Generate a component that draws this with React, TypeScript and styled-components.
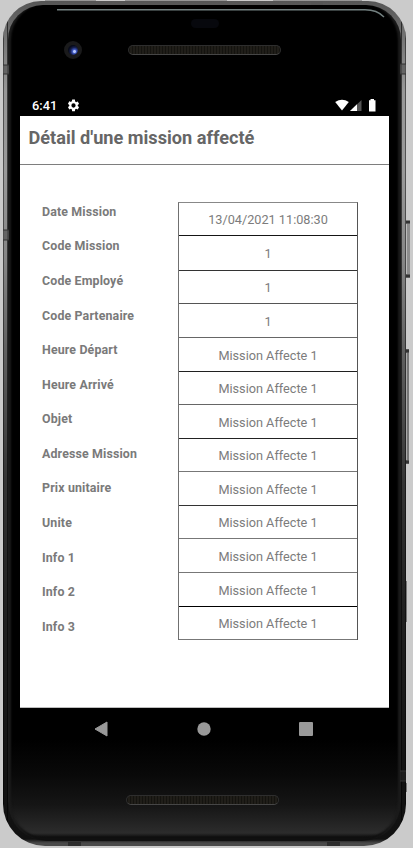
import React from 'react';
import styled, { createGlobalStyle } from 'styled-components';

const GlobalStyle = createGlobalStyle`
  * { box-sizing: border-box; }
  body { margin: 0; background: #cbcbcb; font-family: Roboto, sans-serif; }
`;

const Stage = styled.main`
  position: relative;
  width: 413px;
  height: 848px;
  padding: 1px 7px 2px 3px;
  overflow: hidden;
  background: #cbcbcb;
`;

const Shell = styled.div`
  width: 403px;
  height: 845px;
  padding: 4px 5px 5px;
  border-radius: 38px 38px 42px 42px;
  background:
    linear-gradient(90deg, #0007 0 1px, transparent 1px 4px, #0009 4px 5px, transparent 5px 398px, #0009 398px 399px, transparent 399px 402px, #0007 402px),
    linear-gradient(180deg, #555 0, #777 40px, #979797 90px, #999 170px, #858585 260px, #606060 350px, #353535 480px, #222 600px, #121212 780px, #111 838px, #4a4a4a 842px);
`;

const Face = styled.div`
  display: flex;
  flex-direction: column;
  height: 836px;
  border-radius: 35px 35px 39px 39px;
  padding: 0 12px;
  background:
    linear-gradient(180deg, transparent 0 735px, #090909 770px, #151515 800px, #2c2c2c 828px, #101010 832px),
    #000;
  box-shadow: inset 5px 0 2px -2px #1b1b1b, inset -5px 0 2px -2px #1b1b1b, inset 0 -3px 2px #111;
`;

const TopBezel = styled.div`
  display: flex;
  flex-direction: column;
  height: 93px;
`;

const Glint = styled.svg`
  flex: none;
  align-self: flex-end;
  margin-top: 3px;
`;

const Sensor = styled.div`
  align-self: center;
  width: 28px;
  height: 9px;
  border-radius: 5px;
  background: #07080d;
`;

const CameraRow = styled.div`
  display: grid;
  grid-template-columns: 108px 154px;
  align-items: center;
  margin-top: 13px;
`;

const Camera = styled.div`
  justify-self: center;
  margin-right: 2px;
  width: 18px;
  height: 18px;
  border: 4px solid #1a1a1b;
  border-radius: 50%;
  background: radial-gradient(circle at 65% 65%, #b5c6ff 0 1px, #4059c0 2px, #172052 4px, #070b1b 6px);
`;

const Speaker = styled.div`
  width: 153px;
  height: 10px;
  border: 1px solid #2e2e2e;
  border-bottom-color: #464646;
  border-radius: 5px;
  background: repeating-linear-gradient(90deg, #14130f 0 1px, #201e19 1px 3px);
`;

const StatusBar = styled.div`
  display: flex;
  align-items: center;
  height: 18px;
  padding: 0 13px 3px 12px;
  color: #fff;
  font-size: 12.8px;
  line-height: 15px;
  font-weight: 500;
`;

const Clock = styled.span`
  width: 35px;
`;

const StatusIcons = styled.svg`
  margin-left: auto;
`;

const Screen = styled.section`
  width: 369px;
  height: 592px;
  background: #fff;
  border-bottom: 1px solid #bdbdbd;
`;

const Header = styled.header`
  height: 48px;
  padding: 11px 8.5px 0;
  border-bottom: 0;
`;

const Title = styled.h1`
  margin: 0;
  color: #666;
  font-size: 18.15px;
  line-height: 22px;
  font-weight: 700;
  white-space: nowrap;
`;

const Divider = styled.div`
  height: 1px;
  background: #7e7e7e;
`;

const Details = styled.div`
  display: flex;
  align-items: flex-start;
  justify-content: space-between;
  padding: 37px 31px 0 22px;
`;

const Labels = styled.div`
  display: grid;
  grid-auto-rows: 34.58px;
  margin-top: -8px;
`;

const Label = styled.span`
  display: flex;
  align-items: center;
  color: #7a7a7a;
  font-size: 12.4px;
  letter-spacing: 0.14px;
  font-weight: 700;
  white-space: nowrap;
`;

const Values = styled.div`
  width: 180px;
  border: 1px solid #555;
  border-top-color: #888;
  border-left-color: #707070;
  border-bottom: 0;
`;

const Value = styled.div<{ $height: number; $line: string }>`
  display: flex;
  align-items: center;
  justify-content: center;
  height: ${(p) => p.$height}px;
  padding-top: 1px;
  border-bottom: 1px solid ${(p) => p.$line};
  color: #7c7c7c;
  font-size: 12.7px;
  white-space: nowrap;
`;

const NavBar = styled.nav`
  display: flex;
  align-items: center;
  justify-content: space-between;
  height: 42px;
  padding: 0 76px 0 74px;
`;

const BottomBezel = styled.div`
  display: flex;
  flex: 1;
  align-items: flex-start;
  justify-content: center;
  padding: 45px 4px 0 0;
`;

const Hardware = styled.svg`
  position: absolute;
  inset: 0;
  pointer-events: none;
`;

const fields = [
  { label: 'Date Mission', value: '13/04/2021 11:08:30', height: 33, line: '#151515' },
  { label: 'Code Mission', value: '1', height: 35, line: '#333' },
  { label: 'Code Employé', value: '1', height: 33, line: '#555' },
  { label: 'Code Partenaire', value: '1', height: 34, line: '#666' },
  { label: 'Heure Départ', value: 'Mission Affecte 1', height: 34, line: '#202020' },
  { label: 'Heure Arrivé', value: 'Mission Affecte 1', height: 33, line: '#666' },
  { label: 'Objet', value: 'Mission Affecte 1', height: 34, line: '#222' },
  { label: 'Adresse Mission', value: 'Mission Affecte 1', height: 33, line: '#777' },
  { label: 'Prix unitaire', value: 'Mission Affecte 1', height: 34, line: '#333' },
  { label: 'Unite', value: 'Mission Affecte 1', height: 33, line: '#777' },
  { label: 'Info 1', value: 'Mission Affecte 1', height: 34, line: '#777' },
  { label: 'Info 2', value: 'Mission Affecte 1', height: 34, line: '#000' },
  { label: 'Info 3', value: 'Mission Affecte 1', height: 33, line: '#777' },
];

function GearIcon() {
  return (
    <svg width="13" height="13" viewBox="1 1 22 22" fill="#fff">
      <path d="M19.14 12.94c.04-.3.06-.61.06-.94s-.02-.64-.07-.94l2.03-1.58a.5.5 0 0 0 .12-.61l-1.92-3.32a.5.5 0 0 0-.59-.22l-2.39.96a7 7 0 0 0-1.62-.94l-.36-2.54A.48.48 0 0 0 13.92 2h-3.84a.48.48 0 0 0-.47.41l-.36 2.54a7.3 7.3 0 0 0-1.62.94l-2.39-.96a.48.48 0 0 0-.59.22L2.74 8.87a.48.48 0 0 0 .12.61l2.03 1.58a7.5 7.5 0 0 0 0 1.88l-2.03 1.58a.5.5 0 0 0-.12.61l1.92 3.32c.12.22.37.29.59.22l2.39-.96c.5.38 1.03.7 1.62.94l.36 2.54c.05.24.24.41.47.41h3.84c.24 0 .44-.17.47-.41l.36-2.54a7 7 0 0 0 1.62-.94l2.39.96c.22.08.47 0 .59-.22l1.92-3.32a.48.48 0 0 0-.12-.61zM12 15.6a3.6 3.6 0 1 1 0-7.2 3.6 3.6 0 0 1 0 7.2z" />
    </svg>
  );
}

export default function App() {
  return (
    <>
      <GlobalStyle />
      <Stage>
        <Shell>
          <Face>
            <TopBezel>
              <Glint width="334" height="11" viewBox="0 0 334 11" fill="none">
                <path d="M2 1.8H310C318 1.8 324 3.8 329 9" stroke="#738080" strokeWidth="1.4" />
              </Glint>
              <Sensor />
              <CameraRow>
                <Camera />
                <Speaker />
              </CameraRow>
            </TopBezel>
            <StatusBar>
              <Clock>6:41</Clock>
              <GearIcon />
              <StatusIcons width="41" height="13" viewBox="0 0 41 13">
                <path d="M.2 3Q7 -1.5 13.8 3L7 11.5Z" fill="#fff" />
                <path d="M15 12L26.5 1V12Z" fill="#555" />
                <path d="M15 12L22 5.3V12Z" fill="#fff" />
                <path d="M35.5 0h3.5v1.2h1.5V12.5H34V1.2h1.5Z" fill="#fff" />
              </StatusIcons>
            </StatusBar>
            <Screen>
              <Header>
                <Title>Détail d'une mission affecté</Title>
              </Header>
              <Divider />
              <Details>
                <Labels>
                  {fields.map((f) => (
                    <Label key={f.label}>{f.label}</Label>
                  ))}
                </Labels>
                <Values>
                  {fields.map((f) => (
                    <Value key={f.label} $height={f.height} $line={f.line}>{f.value}</Value>
                  ))}
                </Values>
              </Details>
            </Screen>
            <NavBar>
              <svg width="14" height="16" viewBox="0 0 14 16">
                <path d="M13 1V15L1 8Z" fill="#999" stroke="#999" strokeLinejoin="round" />
              </svg>
              <svg width="14" height="14" viewBox="0 0 14 14">
                <circle cx="7" cy="7" r="6.7" fill="#999" />
              </svg>
              <svg width="14" height="14" viewBox="0 0 14 14">
                <rect width="14" height="14" rx="1" fill="#999" />
              </svg>
            </NavBar>
            <BottomBezel>
              <Speaker />
            </BottomBezel>
          </Face>
        </Shell>
        <Hardware width="413" height="848" viewBox="0 0 413 848">
          <path d="M45 0H96M125 0H227M273 0H362" stroke="#969696" strokeWidth="2" />
          <g fill="#555" opacity=".7">
            <rect x="3" y="65" width="6" height="9" />
            <rect x="3" y="230" width="6" height="10" />
            <rect x="400" y="64" width="6" height="10" />
            <rect x="400" y="771" width="6" height="10" fill="#222" />
            <rect x="311" y="1" width="12" height="4" />
            <rect x="68" y="842" width="13" height="4" fill="#222" />
            <rect x="327" y="842" width="13" height="4" fill="#222" />
          </g>
          <path d="M3 65h6M3 74h6M3 230h6M3 240h6M400 64h6M400 74h6M400 771h6M400 781h6" stroke="#333" />
          <rect x="406" y="221" width="4" height="57" fill="#8d8d8d" />
          <path d="M406 222h4M406 276h4" stroke="#333" strokeWidth="3" />
          <path d="M406.5 224v50" stroke="#bbb" />
          <rect x="406" y="349" width="3" height="115" fill="#777" />
          <path d="M406 351h3M406 462h3" stroke="#333" strokeWidth="3" />
          <path d="M406.5 353v107" stroke="#aaa" />
          <path d="M406.5 581v41M406.5 783v9" stroke="#777" />
        </Hardware>
      </Stage>
    </>
  );
}
